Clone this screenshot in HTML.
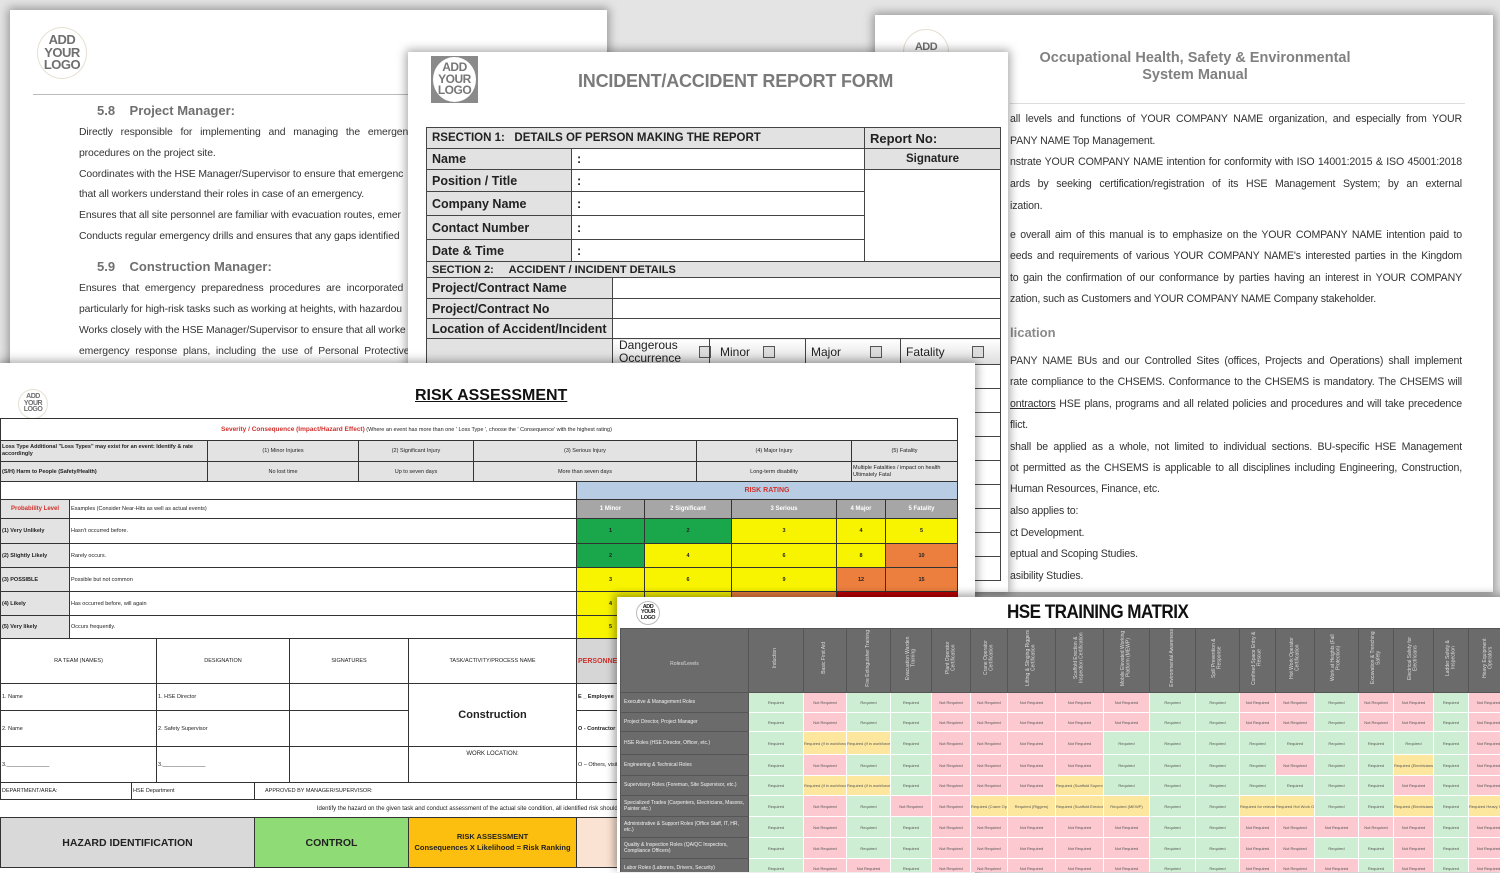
<!DOCTYPE html>
<html><head><meta charset="utf-8">
<style>
*{box-sizing:border-box;margin:0;padding:0}
body{width:1500px;height:862px;overflow:hidden;background:#e4e4e4;position:relative;font-family:"Liberation Sans",Arial,sans-serif;color:#222}
.doc{position:absolute;background:#fff;box-shadow:0 0 9px 2px rgba(0,0,0,.35);overflow:hidden}
.abs{position:absolute}
.logoC{position:absolute;border-radius:50%;border:1px solid #e6e0d2;background:#fff;color:#6f6f6f;font-weight:bold;text-align:center;display:flex;align-items:center;justify-content:center;line-height:.95;letter-spacing:-.5px}
.nw{white-space:nowrap}
table{border-collapse:collapse;table-layout:fixed}
.inc td{border:1.5px solid #444;font-family:"Liberation Sans Narrow","Liberation Sans",sans-serif;font-weight:bold;font-size:12.5px;padding:0 5px;white-space:nowrap;overflow:hidden}
.inc .l{background:#e2e2e2}
.ra td{border:1.5px solid #333;font-size:5.5px;white-space:nowrap;overflow:hidden;text-align:center;padding:0 1px}
.ra .gl{background:#e3e3e3}
.ra .hd{background:#a6a6a6;color:#fff;font-weight:bold;font-size:6px}
.G{background:#1aa64a;font-weight:bold}.Y{background:#f8f400;font-weight:bold}.O{background:#ec7f3e;font-weight:bold}.R{background:#c00000;font-weight:bold}
.mx td{border:1px solid #fff;font-size:4px;color:#555;text-align:center;overflow:hidden;white-space:nowrap;padding:0}
.mx .g{background:#cdeed2}.mx .r{background:#fbc9cf}.mx .y{background:#fde79f}
.mx td.lab{background:#6b6b6b;color:#f2f2f2;text-align:left;font-size:5px;padding-left:3px;white-space:normal;line-height:1.3;border:1px solid #555}
.mx th{background:#6b6b6b;border:1px solid #555;height:61px;padding:0;overflow:hidden}
.mx th span{display:inline-block;writing-mode:vertical-rl;transform:rotate(180deg);font-size:5px;color:#ddd;font-weight:normal;max-height:58px;line-height:1.1}
.rt{font-size:10.6px;color:#333;position:absolute;left:1010px;width:452px;text-align:justify;text-align-last:justify;height:14px;overflow:hidden;font-family:"Liberation Sans",sans-serif;letter-spacing:-.15px}
.rt.s{text-align-last:left}
.lt{position:absolute;left:79px;font-size:10.4px;color:#333;white-space:nowrap;letter-spacing:-.1px}
</style></head><body>

<div class="doc" style="left:875px;top:15px;width:618px;height:577px">
  <div class="logoC" style="left:28px;top:14px;width:46px;height:46px;font-size:11px;align-items:flex-start;padding-top:12px">ADD</div>
  <div class="abs" style="left:100px;width:440px;top:35px;text-align:center;font-weight:bold;color:#808080;font-size:14.5px;line-height:17px">Occupational Health, Safety &amp; Environmental<br>System Manual</div>
  <div class="abs" style="left:135px;top:88px;width:455px;border-top:1px solid #ddd"></div>
</div>
<div style="position:absolute;left:0;top:0">
<div class="rt" style="top:113px">all levels and functions of YOUR COMPANY NAME organization, and especially from YOUR</div>
<div class="rt s" style="top:135px">PANY NAME Top Management.</div>
<div class="rt" style="top:156px">nstrate YOUR COMPANY NAME intention for conformity with ISO 14001:2015 &amp; ISO 45001:2018</div>
<div class="rt" style="top:178px">ards by seeking certification/registration of its HSE Management System; by an external</div>
<div class="rt s" style="top:200px">ization.</div>
<div class="rt" style="top:229px">e overall aim of this manual is to emphasize on the YOUR COMPANY NAME intention paid to</div>
<div class="rt" style="top:250px">eeds and requirements of various YOUR COMPANY NAME's interested parties in the Kingdom</div>
<div class="rt" style="top:272px">to gain the confirmation of our conformance by parties having an interest in YOUR COMPANY</div>
<div class="rt s" style="top:293px">zation, such as Customers and YOUR COMPANY NAME Company stakeholder.</div>
<div class="abs" style="left:1010px;top:325px;font-weight:bold;color:#8a8a8a;font-size:13px">lication</div>
<div class="rt" style="top:355px">PANY NAME BUs and our Controlled Sites (offices, Projects and Operations) shall implement</div>
<div class="rt" style="top:376px">rate compliance to the CHSEMS. Conformance to the CHSEMS is mandatory. The CHSEMS will</div>
<div class="rt" style="top:398px"><u>ontractors</u> HSE plans, programs and all related policies and procedures and will take precedence</div>
<div class="rt s" style="top:419px">flict.</div>
<div class="rt" style="top:441px">shall be applied as a whole, not limited to individual sections. BU-specific HSE Management</div>
<div class="rt" style="top:462px">ot permitted as the CHSEMS is applicable to all disciplines including Engineering, Construction,</div>
<div class="rt s" style="top:483px">Human Resources, Finance, etc.</div>
<div class="rt s" style="top:505px">also applies to:</div>
<div class="rt s" style="top:527px">ct Development.</div>
<div class="rt s" style="top:548px">eptual and Scoping Studies.</div>
<div class="rt s" style="top:570px">asibility Studies.</div>
</div>

<div class="doc" style="left:10px;top:10px;width:597px;height:360px">
  <div class="logoC" style="left:27px;top:17px;width:50px;height:52px;font-size:13px">ADD<br>YOUR<br>LOGO</div>
  <div class="abs" style="left:23px;top:84px;width:400px;border-top:1px solid #bbb"></div>
  <div class="abs nw" style="left:87px;top:93px;font-weight:bold;color:#6f6f6f;font-size:13px">5.8&nbsp;&nbsp;&nbsp;&nbsp;Project Manager:</div>
  <div class="abs nw" style="left:87px;top:249px;font-weight:bold;color:#6f6f6f;font-size:13px">5.9&nbsp;&nbsp;&nbsp;&nbsp;Construction Manager:</div>
</div>
<div class="lt" style="top:127px;word-spacing:5px">Directly responsible for implementing and managing the emergen</div>
<div class="lt" style="top:148px">procedures on the project site.</div>
<div class="lt" style="top:169px">Coordinates with the HSE Manager/Supervisor to ensure that emergenc</div>
<div class="lt" style="top:189px">that all workers understand their roles in case of an emergency.</div>
<div class="lt" style="top:210px">Ensures that all site personnel are familiar with evacuation routes, emer</div>
<div class="lt" style="top:231px">Conducts regular emergency drills and ensures that any gaps identified</div>
<div class="lt" style="top:283px;word-spacing:3px">Ensures that emergency preparedness procedures are incorporated</div>
<div class="lt" style="top:304px">particularly for high-risk tasks such as working at heights, with hazardou</div>
<div class="lt" style="top:325px">Works closely with the HSE Manager/Supervisor to ensure that all worke</div>
<div class="lt" style="top:346px;word-spacing:3px">emergency response plans, including the use of Personal Protective</div>

<div class="doc" style="left:408px;top:52px;width:600px;height:540px">
  <div class="abs" style="left:23px;top:4px;width:47px;height:47px;background:#8a8a8a"></div>
  <div class="logoC" style="left:25px;top:5px;width:43px;height:45px;font-size:12px;border:none;color:#777">ADD<br>YOUR<br>LOGO</div>
  <div class="abs nw" style="left:170px;top:19px;font-family:'Liberation Sans Narrow','Liberation Sans',sans-serif;font-size:18px;color:#7a7a7a;font-weight:bold;letter-spacing:-.2px">INCIDENT/ACCIDENT REPORT FORM</div>
  <table class="inc abs" style="left:18px;top:75px;width:574px">
    <colgroup><col style="width:145px"><col style="width:41px"><col style="width:252px"><col style="width:136px"></colgroup>
    <tr style="height:21px"><td colspan="3" class="l" style="font-size:11.5px">RSECTION 1:&nbsp;&nbsp; DETAILS OF PERSON MAKING THE REPORT</td><td class="l" style="font-size:13px">Report No:</td></tr>
    <tr style="height:21px"><td class="l">Name</td><td colspan="2">:</td><td class="l" style="text-align:center;font-size:11.5px">Signature</td></tr>
    <tr style="height:22px"><td class="l">Position / Title</td><td colspan="2">:</td><td rowspan="4"></td></tr>
    <tr style="height:24px"><td class="l">Company Name</td><td colspan="2">:</td></tr>
    <tr style="height:24px"><td class="l">Contact Number</td><td colspan="2">:</td></tr>
    <tr style="height:22px"><td class="l">Date &amp; Time</td><td colspan="2">:</td></tr>
    <tr style="height:16px"><td colspan="4" class="l" style="font-size:11px">SECTION 2:&nbsp;&nbsp;&nbsp;&nbsp; ACCIDENT / INCIDENT DETAILS</td></tr>
    <tr style="height:21px"><td colspan="2" class="l">Project/Contract Name</td><td colspan="2"></td></tr>
    <tr style="height:20px"><td colspan="2" class="l">Project/Contract No</td><td colspan="2"></td></tr>
    <tr style="height:20px"><td colspan="2" class="l">Location of Accident/Incident</td><td colspan="2"></td></tr>
    <tr style="height:26px"><td colspan="2" class="l"></td><td colspan="2" style="background:linear-gradient(#fff,#ddd);font-weight:normal;font-size:12px;padding:0;position:relative">
      <span class="abs" style="left:6px;top:0;line-height:13px">Dangerous<br>Occurrence</span>
      <span class="abs" style="left:86px;top:7px;width:12px;height:12px;border:1.5px solid #555;background:#ddd"></span>
      <span class="abs" style="left:96px;top:-2px;height:30px;border-left:1.5px solid #444"></span>
      <span class="abs" style="left:107px;top:6px">Minor</span>
      <span class="abs" style="left:150px;top:7px;width:12px;height:12px;border:1.5px solid #555;background:#ddd"></span>
      <span class="abs" style="left:192px;top:-2px;height:30px;border-left:1.5px solid #444"></span>
      <span class="abs" style="left:198px;top:6px">Major</span>
      <span class="abs" style="left:257px;top:7px;width:12px;height:12px;border:1.5px solid #555;background:#ddd"></span>
      <span class="abs" style="left:287px;top:-2px;height:30px;border-left:1.5px solid #444"></span>
      <span class="abs" style="left:293px;top:6px">Fatality</span>
      <span class="abs" style="left:359px;top:7px;width:12px;height:12px;border:1.5px solid #555;background:#ddd"></span>
    </td></tr>
    <tr style="height:24px"><td colspan="2" class="l"></td><td colspan="2"></td></tr>
    <tr style="height:24px"><td colspan="2" class="l"></td><td colspan="2"></td></tr>
    <tr style="height:24px"><td colspan="2" class="l"></td><td colspan="2"></td></tr>
    <tr style="height:24px"><td colspan="2" class="l"></td><td colspan="2"></td></tr>
    <tr style="height:24px"><td colspan="2" class="l"></td><td colspan="2"></td></tr>
    <tr style="height:24px"><td colspan="2" class="l"></td><td colspan="2"></td></tr>
    <tr style="height:24px"><td colspan="2" class="l"></td><td colspan="2"></td></tr>
    <tr style="height:24px"><td colspan="2" class="l"></td><td colspan="2"></td></tr>
    <tr style="height:24px"><td colspan="2" class="l"></td><td colspan="2"></td></tr>
  </table>
</div>

<div class="doc" style="left:0;top:363px;width:975px;height:510px">
  <div class="logoC" style="left:18px;top:26px;width:30px;height:30px;font-size:7px">ADD<br>YOUR<br>LOGO</div>
  <div class="abs nw" style="left:415px;top:24px;font-size:16px;font-weight:bold;text-decoration:underline;color:#111">RISK ASSESSMENT</div>
  <table class="ra abs" style="left:0;top:55px;width:957px">
    <colgroup><col style="width:69px"><col style="width:138px"><col style="width:151px"><col style="width:115px"><col style="width:103px"><col style="width:68px"><col style="width:52px"><col style="width:35px"><col style="width:105px"><col style="width:15px"><col style="width:34px"><col style="width:72px"></colgroup>
    <tr style="height:22px"><td colspan="12" style="text-align:left;padding-left:220px"><b style="color:#d0312d;font-size:6.5px">Severity / Consequence (Impact/Hazard Effect)</b> (Where an event has more than one ' Loss Type ', choose the ' Consequence' with the highest rating)</td></tr>
    <tr style="height:21px"><td colspan="2" class="gl" style="text-align:left;white-space:normal;font-weight:bold;line-height:1.3">Loss Type Additional "Loss Types" may exist for an event: Identify &amp; rate accordingly</td><td class="gl">(1) Minor Injuries</td><td class="gl">(2) Significant Injury</td><td colspan="3" class="gl">(3) Serious Injury</td><td colspan="3" class="gl">(4) Major Injury</td><td colspan="2" class="gl">(5) Fatality</td></tr>
    <tr style="height:20px"><td colspan="2" class="gl" style="text-align:left;font-weight:bold">(S/H) Harm to People (Safety/Health)</td><td class="gl">No lost time</td><td class="gl">Up to seven days</td><td colspan="3" class="gl">More than seven days</td><td colspan="3" class="gl">Long-term disability</td><td colspan="2" class="gl" style="text-align:left;white-space:normal;line-height:1.2">Multiple Fatalities / impact on health Ultimately Fatal</td></tr>
    <tr style="height:18px"><td colspan="5"></td><td colspan="7" style="background:#b8cce4;color:#d0312d;font-weight:bold;font-size:7px">RISK RATING</td></tr>
    <tr style="height:19px"><td style="background:#e3e3e3;color:#d0312d;font-weight:bold;font-size:6px">Probability Level</td><td colspan="4" style="text-align:left">Examples (Consider Near-Hits as well as actual events)</td><td class="hd">1 Minor</td><td class="hd" colspan="2">2 Significant</td><td class="hd">3 Serious</td><td class="hd" colspan="2">4 Major</td><td class="hd">5 Fatality</td></tr>
    <tr style="height:25px"><td class="gl" style="text-align:left;font-weight:bold">(1) Very Unlikely</td><td colspan="4" style="text-align:left">Hasn't occurred before.</td><td class="G">1</td><td class="G" colspan="2">2</td><td class="Y">3</td><td class="Y" colspan="2">4</td><td class="Y">5</td></tr>
    <tr style="height:24px"><td class="gl" style="text-align:left;font-weight:bold">(2) Slightly Likely</td><td colspan="4" style="text-align:left">Rarely occurs.</td><td class="G">2</td><td class="Y" colspan="2">4</td><td class="Y">6</td><td class="Y" colspan="2">8</td><td class="O">10</td></tr>
    <tr style="height:24px"><td class="gl" style="text-align:left;font-weight:bold">(3) POSSIBLE</td><td colspan="4" style="text-align:left">Possible but not common</td><td class="Y">3</td><td class="Y" colspan="2">6</td><td class="Y">9</td><td class="O" colspan="2">12</td><td class="O">15</td></tr>
    <tr style="height:24px"><td class="gl" style="text-align:left;font-weight:bold">(4) Likely</td><td colspan="4" style="text-align:left">Has occurred before, will again</td><td class="Y">4</td><td class="Y" colspan="2">8</td><td class="O">12</td><td class="R" colspan="2">16</td><td class="R">20</td></tr>
    <tr style="height:23px"><td class="gl" style="text-align:left;font-weight:bold">(5) Very likely</td><td colspan="4" style="text-align:left">Occurs frequently.</td><td class="Y">5</td><td class="O" colspan="2">10</td><td class="O">15</td><td class="R" colspan="2">20</td><td class="R">25</td></tr>
  </table>

  <table class="ra abs" style="left:0;top:275px;width:640px">
    <colgroup><col style="width:131px"><col style="width:25px"><col style="width:98px"><col style="width:35px"><col style="width:119px"><col style="width:168px"><col style="width:64px"></colgroup>
    <tr style="height:45px"><td colspan="2">RA TEAM (NAMES)</td><td colspan="2">DESIGNATION</td><td>SIGNATURES</td><td>TASK/ACTIVITY/PROCESS NAME</td><td style="background:#d6d6d6;color:#d0312d;font-weight:bold;text-align:left;font-size:7px">PERSONNEL</td></tr>
    <tr style="height:27px"><td colspan="2" style="text-align:left">1. Name</td><td colspan="2" style="text-align:left">1. HSE Director</td><td></td><td rowspan="2" style="font-size:11px;font-weight:bold">Construction</td><td style="text-align:left;font-weight:bold">E _ Employee</td></tr>
    <tr style="height:36px"><td colspan="2" style="text-align:left">2. Name</td><td colspan="2" style="text-align:left">2. Safety Supervisor</td><td></td><td style="text-align:left;font-weight:bold">O - Contractor and</td></tr>
    <tr style="height:36px"><td colspan="2" style="text-align:left">3.______________</td><td colspan="2" style="text-align:left">3.______________</td><td></td><td style="vertical-align:top;padding-top:4px;font-size:6px">WORK LOCATION:</td><td style="text-align:left">O – Others, visitors</td></tr>
    <tr style="height:17px"><td style="text-align:left">DEPARTMENT/AREA:</td><td colspan="2" style="text-align:left">HSE Department</td><td colspan="3" style="text-align:left;padding-left:10px">APPROVED BY MANAGER/SUPERVISOR:</td><td></td></tr>
    <tr style="height:18px"><td colspan="7" style="text-align:right;border-left:none;font-size:6px">Identify the hazard on the given task and conduct assessment of the actual site condition, all identified risk should provide</td></tr>
    <tr style="height:50px"><td colspan="3" style="background:#d9d9d9;font-size:10.5px;font-weight:bold;color:#222">HAZARD IDENTIFICATION</td><td colspan="2" style="background:#8fdb76;font-size:10.5px;font-weight:bold;color:#222">CONTROL</td><td style="background:#fdbf0f;font-size:7.5px;font-weight:bold;white-space:normal;line-height:1.45;color:#222">RISK ASSESSMENT<br>Consequences X Likelihood = Risk Ranking</td><td style="background:#fbe3d3"></td></tr>
  </table>
</div>

<div class="doc" style="left:617px;top:597px;width:900px;height:275px;box-shadow:-3px -3px 8px rgba(0,0,0,.35)">
  <div class="logoC" style="left:19px;top:4px;width:24px;height:24px;font-size:5.5px;color:#222;border-color:#bbb">ADD<br>YOUR<br>LOGO</div>
  <div class="abs nw" style="left:390px;top:5px;font-family:'Liberation Sans Narrow','Liberation Sans',sans-serif;font-weight:bold;font-size:19px;color:#111;letter-spacing:-.6px;transform:scaleX(.9);transform-origin:left">HSE TRAINING MATRIX</div>
  <table class="mx abs" style="left:3px;top:31px;width:928px">
    <colgroup><col style="width:128px"><col style="width:55px"><col style="width:43px"><col style="width:44px"><col style="width:41px"><col style="width:39px"><col style="width:37px"><col style="width:48px"><col style="width:48px"><col style="width:46px"><col style="width:46px"><col style="width:44px"><col style="width:36px"><col style="width:39px"><col style="width:44px"><col style="width:35px"><col style="width:40px"><col style="width:35px"><col style="width:40px"><col style="width:40px"></colgroup>
    <tr><th><span style="writing-mode:horizontal-tb;transform:none;font-size:5px">Roles/Levels</span></th><th><span>Induction</span></th><th><span>Basic First Aid</span></th><th><span>Fire Extinguisher Training</span></th><th><span>Evacuation Warden Training</span></th><th><span>Plant Operator Certification</span></th><th><span>Crane Operator Certification</span></th><th><span>Lifting &amp; Slinging Riggers Certification</span></th><th><span>Scaffold Erection &amp; Inspection Certification</span></th><th><span>Mobile Elevated Working Platform (MEWP)</span></th><th><span>Environmental Awareness</span></th><th><span>Spill Prevention &amp; Response</span></th><th><span>Confined Space Entry &amp; Rescue</span></th><th><span>Hot Work Operator Certification</span></th><th><span>Work at Heights (Fall Protection)</span></th><th><span>Excavation &amp; Trenching Safety</span></th><th><span>Electrical Safety for Electricians</span></th><th><span>Ladder Safety &amp; Inspection</span></th><th><span>Heavy Equipment Operators</span></th><th><span>Other</span></th></tr>
    <tr style="height:20px"><td class="lab">Executive &amp; Management Roles</td><td class="g">Required</td><td class="r">Not Required</td><td class="g">Required</td><td class="g">Required</td><td class="r">Not Required</td><td class="r">Not Required</td><td class="r">Not Required</td><td class="r">Not Required</td><td class="r">Not Required</td><td class="g">Required</td><td class="g">Required</td><td class="r">Not Required</td><td class="r">Not Required</td><td class="g">Required</td><td class="r">Not Required</td><td class="r">Not Required</td><td class="g">Required</td><td class="r">Not Required</td><td class="r">Not</td></tr>
    <tr style="height:19px"><td class="lab">Project Director, Project Manager</td><td class="g">Required</td><td class="r">Not Required</td><td class="g">Required</td><td class="g">Required</td><td class="r">Not Required</td><td class="r">Not Required</td><td class="r">Not Required</td><td class="r">Not Required</td><td class="r">Not Required</td><td class="g">Required</td><td class="g">Required</td><td class="r">Not Required</td><td class="r">Not Required</td><td class="g">Required</td><td class="r">Not Required</td><td class="r">Not Required</td><td class="g">Required</td><td class="r">Not Required</td><td class="r">Not</td></tr>
    <tr style="height:23px"><td class="lab">HSE Roles (HSE Director, Officer, etc.)</td><td class="g">Required</td><td class="y">Required (if in workforce)</td><td class="y">Required (if in workforce)</td><td class="g">Required</td><td class="r">Not Required</td><td class="r">Not Required</td><td class="r">Not Required</td><td class="r">Not Required</td><td class="g">Required</td><td class="g">Required</td><td class="g">Required</td><td class="g">Required</td><td class="g">Required</td><td class="g">Required</td><td class="g">Required</td><td class="g">Required</td><td class="g">Required</td><td class="r">Not Required</td><td class="r">Not</td></tr>
    <tr style="height:21px"><td class="lab">Engineering &amp; Technical Roles</td><td class="g">Required</td><td class="r">Not Required</td><td class="g">Required</td><td class="g">Required</td><td class="r">Not Required</td><td class="r">Not Required</td><td class="r">Not Required</td><td class="r">Not Required</td><td class="g">Required</td><td class="g">Required</td><td class="g">Required</td><td class="g">Required</td><td class="r">Not Required</td><td class="g">Required</td><td class="g">Required</td><td class="y">Required (Electricians only)</td><td class="g">Required</td><td class="r">Not Required</td><td class="r">Not</td></tr>
    <tr style="height:20px"><td class="lab">Supervisory Roles (Foreman, Site Supervisor, etc.)</td><td class="g">Required</td><td class="y">Required (if in workforce)</td><td class="y">Required (if in workforce)</td><td class="g">Required</td><td class="r">Not Required</td><td class="r">Not Required</td><td class="r">Not Required</td><td class="y">Required (Scaffold Supervisors)</td><td class="g">Required</td><td class="g">Required</td><td class="g">Required</td><td class="g">Required</td><td class="g">Required</td><td class="g">Required</td><td class="g">Required</td><td class="r">Not Required</td><td class="g">Required</td><td class="r">Not Required</td><td class="r">Not</td></tr>
    <tr style="height:21px"><td class="lab">Specialized Trades (Carpenters, Electricians, Masons, Painter etc.)</td><td class="g">Required</td><td class="r">Not Required</td><td class="g">Required</td><td class="r">Not Required</td><td class="r">Not Required</td><td class="y">Required (Crane Operators)</td><td class="y">Required (Riggers)</td><td class="y">Required (Scaffold Erectors)</td><td class="y">Required (MEWP)</td><td class="g">Required</td><td class="g">Required</td><td class="y">Required for relevant roles</td><td class="y">Required Hot Work Operators</td><td class="g">Required</td><td class="g">Required</td><td class="y">Required (Electricians only)</td><td class="g">Required</td><td class="y">Required Heavy Operators</td><td class="y">Req</td></tr>
    <tr style="height:21px"><td class="lab">Administrative &amp; Support Roles (Office Staff, IT, HR, etc.)</td><td class="g">Required</td><td class="r">Not Required</td><td class="g">Required</td><td class="g">Required</td><td class="r">Not Required</td><td class="r">Not Required</td><td class="r">Not Required</td><td class="r">Not Required</td><td class="r">Not Required</td><td class="g">Required</td><td class="g">Required</td><td class="r">Not Required</td><td class="r">Not Required</td><td class="r">Not Required</td><td class="r">Not Required</td><td class="r">Not Required</td><td class="g">Required</td><td class="r">Not Required</td><td class="r">Not</td></tr>
    <tr style="height:21px"><td class="lab">Quality &amp; Inspection Roles (QA/QC Inspectors, Compliance Officers)</td><td class="g">Required</td><td class="r">Not Required</td><td class="g">Required</td><td class="g">Required</td><td class="r">Not Required</td><td class="r">Not Required</td><td class="r">Not Required</td><td class="r">Not Required</td><td class="r">Not Required</td><td class="g">Required</td><td class="g">Required</td><td class="r">Not Required</td><td class="r">Not Required</td><td class="g">Required</td><td class="g">Required</td><td class="r">Not Required</td><td class="g">Required</td><td class="r">Not Required</td><td class="r">Not</td></tr>
    <tr style="height:20px"><td class="lab">Labor Roles (Laborers, Drivers, Security)</td><td class="g">Required</td><td class="r">Not Required</td><td class="r">Not Required</td><td class="g">Required</td><td class="r">Not Required</td><td class="r">Not Required</td><td class="r">Not Required</td><td class="r">Not Required</td><td class="r">Not Required</td><td class="g">Required</td><td class="g">Required</td><td class="r">Not Required</td><td class="r">Not Required</td><td class="r">Not Required</td><td class="g">Required</td><td class="r">Not Required</td><td class="g">Required</td><td class="r">Not Required</td><td class="r">Not</td></tr>
  </table>
</div>
</body></html>
